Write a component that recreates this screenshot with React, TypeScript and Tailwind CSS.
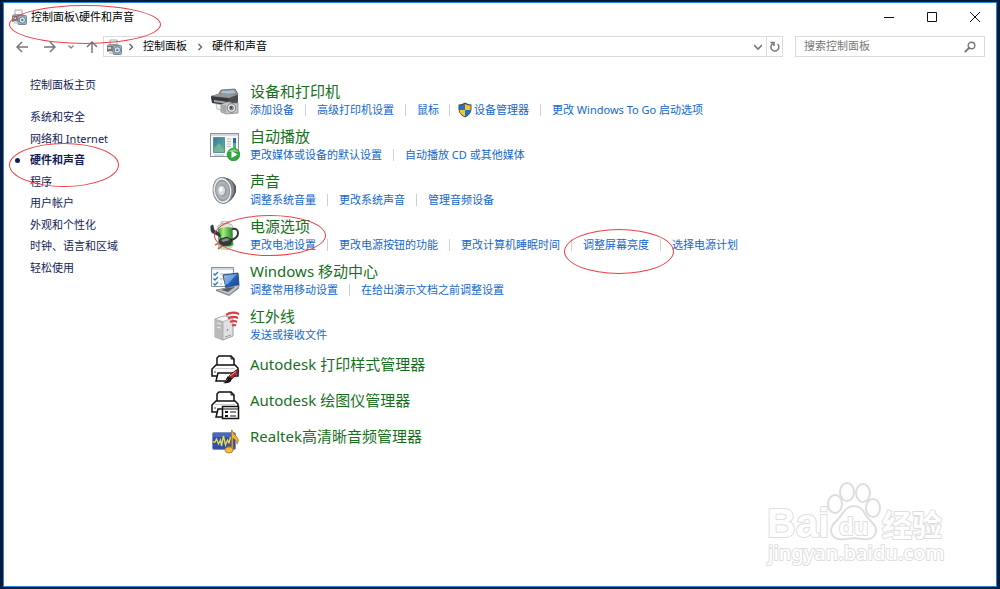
import type { ReactNode } from 'react';

/**
 * Icons
 */
const DevicesSmallIcon = () => (
  <svg viewBox="0 0 16 16" className="size-4 shrink-0" aria-hidden="true">
    <path d="M4 1h7v5H4z" fill="#fbfbfb" stroke="#a9aaac" />
    <path d="M1 6.5 3 5h9l2 2v6H1z" fill="#9a9ea3" />
    <path d="M1 7h8v5H1z" fill="#747a80" />
    <path d="M2 8h3v2H2z" fill="#c9dce8" />
    <path d="M3 12h3v3H3z" fill="#d6d8da" />
    <rect x="7" y="6.500" width="8.500" height="9" rx="1" fill="#a3b1bc" stroke="#7d8993" />
    <circle cx="11.300" cy="11" r="3.200" fill="#dbe8f1" stroke="#667b8c" />
    <circle cx="11.300" cy="11" r="1.200" fill="#4d80a8" />
  </svg>
);

const PrinterCameraIcon = () => (
  <svg viewBox="0 0 30 30" className="size-[30px]" aria-hidden="true">
    <path d="m8 9 3-5 14-1 3 5-8 3z" fill="#8d9195" stroke="#5c5f63" strokeWidth=".7" />
    <path d="m12 5 12-.8 1.500 3-15 1z" fill="#a8c4d2" />
    <path d="m1 10 9-2.500 18 1v8l-8 3-18-4z" fill="#4a4c50" />
    <path d="m1 10 9-2.500 18 1-9 3.500z" fill="#95999d" />
    <path d="m1 10.500 18 2v7.500L2 17z" fill="#37393d" />
    <path d="m4 14 11 1.500v2L4 16z" fill="#a4a8ab" />
    <path d="m6 18 8 1v6l-7-2z" fill="#f1f1ef" stroke="#a5a5a3" strokeWidth=".6" />
    <path d="M11 18.500 14 17l2-1h4l2 1h6v10l-12 1-5-2z" fill="#c4c6c8" stroke="#7b7d80" strokeWidth=".7" />
    <path d="M11.500 19h4.500v8l-4.500-2z" fill="#a5a7aa" />
    <circle cx="21.500" cy="22" r="4.300" fill="#e6e7e7" stroke="#77797b" />
    <circle cx="21.500" cy="22" r="2.400" fill="#77838c" />
    <circle cx="21" cy="21.500" r="1" fill="#243543" />
  </svg>
);

const AutoPlayIcon = () => (
  <svg viewBox="0 0 30 30" className="size-[30px]" aria-hidden="true">
    <defs>
      <linearGradient id="autoplay" x1="0" y1="0" x2="1" y2="1">
        <stop offset="0" stopColor="#3978aa" />
        <stop offset="1" stopColor="#68b48b" />
      </linearGradient>
    </defs>
    <rect x=".5" y="2.500" width="28" height="23" fill="#f7f8f9" stroke="#8b9299" />
    <path d="M1 3h27v2H1z" fill="#d3d9de" />
    <path d="M3.500 6.500h11v15h-11z" fill="url(#autoplay)" stroke="#5d9197" />
    <path d="m4 17 5-5 5 7v2H4z" fill="#8ac398" opacity=".6" />
    <path d="M17 8h4M17 10.500h4M17 13h4M17 15.500h4M4 24h10" stroke="#b7bcc1" />
    <path d="M23 7h3v10h-3z" fill="#35689d" />
    <path d="M23 12h3v5h-3z" fill="#56ac8b" />
    <circle cx="23.500" cy="23.500" r="6.300" fill="#31a73b" stroke="#168a25" strokeWidth=".7" />
    <path d="M18.500 21a6 6 0 0 1 10 0q-5-1-10 0" fill="#87d27e" />
    <path d="m21.500 20 6 3.500-6 3.500z" fill="#fff" />
  </svg>
);

const SpeakerIcon = () => (
  <svg viewBox="0 0 30 30" className="size-[30px]" aria-hidden="true">
    <defs>
      <radialGradient id="cone">
        <stop offset="0" stopColor="#b9bdc3" />
        <stop offset=".35" stopColor="#8e949c" />
        <stop offset=".75" stopColor="#b4b8be" />
        <stop offset="1" stopColor="#83878e" />
      </radialGradient>
    </defs>
    <path d="M13 1q9 1 13 9v6q-3 9-12 12z" fill="#56595d" />
    <path d="M19 4q5 5 4 12l-3 7" fill="none" stroke="#8a8d91" strokeWidth="2" />
    <ellipse cx="12.500" cy="14.500" rx="9.500" ry="13" transform="rotate(-6 12.500 14.500)" fill="#eceeef" stroke="#83868a" />
    <ellipse cx="12.500" cy="14.500" rx="7.500" ry="10.800" transform="rotate(-6 12.500 14.500)" fill="url(#cone)" />
    <ellipse cx="11.500" cy="14.500" rx="3.500" ry="4.800" fill="#d9dce0" />
    <ellipse cx="11" cy="13.500" rx="1.800" ry="2.400" fill="#f6f7f8" />
  </svg>
);

const PowerIcon = () => (
  <svg viewBox="0 0 30 30" className="size-[30px]" aria-hidden="true">
    <defs>
      <linearGradient id="battery">
        <stop offset="0" stopColor="#2b9b28" />
        <stop offset=".35" stopColor="#a6ee7f" />
        <stop offset="1" stopColor="#1b8420" />
      </linearGradient>
    </defs>
    <path d="M11 3V1q4-2 8 0v2z" fill="#e7e9e7" stroke="#999" strokeWidth=".6" />
    <path d="M8 5q6-4 14-1l1 21q-6 6-14 2z" fill="url(#battery)" stroke="#688668" strokeWidth=".7" />
    <path d="M8 5q6-4 14-1l.2 3Q15 4.500 8.200 8z" fill="#dfe5dc" />
    <path d="M9 24q7 4 14 0v2q-6 5-14 2z" fill="#d2dacf" />
    <path d="M22 8q6-1 6 4 0 5-7 7l-4 1" fill="none" stroke="#33393f" strokeWidth="2" />
    <path d="M.5 5q3-3 3 0l1 4 4 2q3 2 2 6L8 15 2 12q-2-2-1.500-7" fill="#373c42" />
    <path d="m10 18 7-2 5 3-2 5-8 1-3-4z" fill="#353a40" stroke="#181b1f" strokeWidth=".6" />
    <path d="m11 19 6-2 3 2-7 2z" fill="#868d95" />
    <path d="m9 22-4 2m7 1-4 3" stroke="#b07b4d" strokeWidth="1.600" />
  </svg>
);

const MobilityIcon = () => (
  <svg viewBox="0 0 30 30" className="size-[30px]" aria-hidden="true">
    <defs>
      <linearGradient id="screen" x1="0" y1="0" x2="1" y2="1">
        <stop offset="0" stopColor="#82bbef" />
        <stop offset=".5" stopColor="#2464bd" />
        <stop offset="1" stopColor="#153f93" />
      </linearGradient>
    </defs>
    <path d="M1.500 1.500h22v19h-22z" fill="#f9fbfd" stroke="#87919b" />
    <path d="M2 2h21v2H2z" fill="#d1dae2" />
    <path d="m3.500 7.500 1.500 1.500 3-3m-4.500 6.500L5 14l3-3m-4.500 6.500L5 19l3-3" fill="none" stroke="#2676bb" strokeWidth="1.300" />
    <path d="M10 8h9M10 13h4M10 18h2" stroke="#a8b7c3" />
    <path d="m13 9 15-2 1 12-13 3z" fill="url(#screen)" stroke="#35516d" />
    <path d="m14 10 13-2-9 10-3 1z" fill="#b5dcf7" opacity=".45" />
    <path d="m16 22 13-3v2l-10 8-13-5z" fill="#bfc5c9" stroke="#687078" strokeWidth=".7" />
    <path d="m11 24 6-2 8-1-7 5z" fill="#555e67" />
    <path d="m6 24 13 5 10-8v1.500L19 30 6 25z" fill="#83898f" />
  </svg>
);

const InfraredIcon = () => (
  <svg viewBox="0 0 30 30" className="size-[30px]" aria-hidden="true">
    <path d="m5 8 9-3 9 2v18l-10 4-8-3z" fill="#e0e1e2" stroke="#8a8c8e" strokeWidth=".8" />
    <path d="m5 8 8 2.500V29l-8-3z" fill="#b9bbbd" />
    <path d="m5 8 9-3 9 2-10 3.500z" fill="#f8f8f8" stroke="#999" strokeWidth=".5" />
    <path d="m7 12 4 1m-4 3 4 1" stroke="#eee" />
    <path d="M13 10.500V29" stroke="#999" strokeWidth=".6" />
    <path d="m15 26 6-2" stroke="#999" />
    <circle cx="17.500" cy="19" r=".8" fill="#6b6e70" />
    <g fill="none" stroke="#dc3c42" strokeWidth="2.200">
      <path d="M16 4q6-4 13-1" />
      <path d="M18 7.500q5-3 10-.5" />
      <path d="M20 11q4-2 7 0" />
      <path d="M22 14.500q2-1 4 0" />
    </g>
  </svg>
);

const Printer = () => (
  <>
    <path d="M7 11V4l2-2h12l3 3v6" fill="#fff" stroke="#111" strokeWidth="1.500" />
    <path d="M21 2v3h3" fill="none" stroke="#111" />
    <path d="M6 11h19l3 3v8H2v-7z" fill="#fff" stroke="#111" strokeWidth="1.500" />
    <path d="M5 14.500h20" stroke="#ccc" />
    <path d="m8 19-2 8h14l3-8z" fill="#fff" stroke="#111" strokeWidth="1.500" />
    <path d="M4 18h2" stroke="#888" strokeWidth="1.500" />
  </>
);

const PlotStyleIcon = () => (
  <svg viewBox="0 0 30 30" className="size-[30px]" aria-hidden="true">
    <Printer />
    <path d="m19 22 7-6q3-1 2.500 2l-6.500 7z" fill="#b3232a" stroke="#4a090d" strokeWidth=".8" />
    <path d="m20 22 6-4.500" stroke="#f6a0a0" />
    <path d="m18 22 4 3-2 3q-3 2-7 1 3-1 3-4z" fill="#151515" />
    <path d="m16 27 2-2" stroke="#c52c33" />
  </svg>
);

const PlotterIcon = () => (
  <svg viewBox="0 0 30 30" className="size-[30px]" aria-hidden="true">
    <Printer />
    <path d="M12.500 16.500h16v12h-16z" fill="#fff" stroke="#111" strokeWidth="1.500" />
    <path d="M13 19h15" stroke="#111" />
    <path d="M15 22h3M15 26h3" stroke="#111" strokeWidth="2" />
    <path d="M20 22h6M20 26h6" stroke="#111" />
  </svg>
);

const RealtekIcon = () => (
  <svg viewBox="0 0 30 30" className="size-[30px]" aria-hidden="true">
    <rect x="2.500" y="6.500" width="23" height="17" rx="1.500" fill="#3350a8" stroke="#7f93c8" />
    <path d="M3 7h22v4H3z" fill="#5671bd" opacity=".7" />
    <path d="M3 16h2l1.500-3 2 5 2-4 1 6 2-10 2 9 2-5 1.500 3 1.500-6" fill="none" stroke="#e9e04a" strokeWidth="1.300" />
    <path d="M22 4q1 4 4 6 4 4 1 8 0-4-4-6v12a3.500 3 0 1 1-1.500-3V4z" fill="#efb337" stroke="#a57118" strokeWidth=".7" />
    <ellipse cx="19" cy="24" rx="4" ry="3" fill="#f3b941" stroke="#a97218" strokeWidth=".7" />
  </svg>
);

const ShieldIcon = () => (
  <svg viewBox="0 0 14 16" className="h-4 w-3.5 shrink-0" aria-hidden="true">
    <path d="M7 .5q3 2 6.500 2v5q-.5 5-6.500 8-6-3-6.500-8v-5q3.500 0 6.500-2" fill="#4c4f55" />
    <path d="M7 2v6H1.500V3.500Q4 3.500 7 2" fill="#1e73c8" />
    <path d="M7 2q3 1.500 5.500 1.500V8H7z" fill="#f7c62f" />
    <path d="M1.500 8H7v6.500Q2 12 1.500 8" fill="#f7c62f" />
    <path d="M7 8h5.500Q12 12 7 14.500z" fill="#1e73c8" />
  </svg>
);

const ChevronRight = () => (
  <svg viewBox="0 0 6 8" className="h-2 w-1.5 shrink-0" fill="none" stroke="#666" strokeWidth="1.400" aria-hidden="true">
    <path d="m1.500 1 3 3-3 3" />
  </svg>
);

/**
 * Data
 */
type Task = { label: string; shield?: boolean };
type Category = { title: string; icon: ReactNode; tasks: Task[] };

const sidebarLinks = [
  '系统和安全',
  '网络和 Internet',
  '硬件和声音',
  '程序',
  '用户帐户',
  '外观和个性化',
  '时钟、语言和区域',
  '轻松使用',
];

const categories: Category[] = [
  {
    title: '设备和打印机',
    icon: <PrinterCameraIcon />,
    tasks: [
      { label: '添加设备' },
      { label: '高级打印机设置' },
      { label: '鼠标' },
      { label: '设备管理器', shield: true },
      { label: '更改 Windows To Go 启动选项' },
    ],
  },
  {
    title: '自动播放',
    icon: <AutoPlayIcon />,
    tasks: [{ label: '更改媒体或设备的默认设置' }, { label: '自动播放 CD 或其他媒体' }],
  },
  {
    title: '声音',
    icon: <SpeakerIcon />,
    tasks: [{ label: '调整系统音量' }, { label: '更改系统声音' }, { label: '管理音频设备' }],
  },
  {
    title: '电源选项',
    icon: <PowerIcon />,
    tasks: [
      { label: '更改电池设置' },
      { label: '更改电源按钮的功能' },
      { label: '更改计算机睡眠时间' },
      { label: '调整屏幕亮度' },
      { label: '选择电源计划' },
    ],
  },
  {
    title: 'Windows 移动中心',
    icon: <MobilityIcon />,
    tasks: [{ label: '调整常用移动设置' }, { label: '在给出演示文档之前调整设置' }],
  },
  {
    title: '红外线',
    icon: <InfraredIcon />,
    tasks: [{ label: '发送或接收文件' }],
  },
];

const tools = [
  { title: 'Autodesk 打印样式管理器', icon: <PlotStyleIcon /> },
  { title: 'Autodesk 绘图仪管理器', icon: <PlotterIcon /> },
  { title: 'Realtek高清晰音频管理器', icon: <RealtekIcon /> },
];

/**
 * Components
 */
const TitleBar = () => (
  <header className="flex h-7 items-center justify-between pl-[7px]">
    <div className="flex items-center gap-1">
      <DevicesSmallIcon />
      <h1 className="text-[11px] text-black">控制面板\硬件和声音</h1>
    </div>
    <div className="flex">
      <button type="button" aria-label="最小化" className="flex h-7 w-[43px] items-center justify-center">
        <svg viewBox="0 0 10 10" className="size-2.5" stroke="#111"><path d="M0 5.500h10" /></svg>
      </button>
      <button type="button" aria-label="最大化" className="flex h-7 w-[43px] items-center justify-center">
        <svg viewBox="0 0 10 10" className="size-2.5" fill="none" stroke="#111"><path d="M.5.5h9v9h-9z" /></svg>
      </button>
      <button type="button" aria-label="关闭" className="flex h-7 w-[43px] items-center justify-center">
        <svg viewBox="0 0 10 10" className="size-2.5" stroke="#111"><path d="m0 0 10 10M10 0 0 10" /></svg>
      </button>
    </div>
  </header>
);

const NavBar = () => (
  <nav className="mt-[5px] flex h-[21px] items-center pr-[11px] pl-3">
    <div className="flex w-[87px] items-center">
      <button type="button" aria-label="后退">
        <svg viewBox="0 0 12 12" className="size-3" fill="none" stroke="#777" strokeWidth="1.500"><path d="M12 6H1m5-5L1 6l5 5" /></svg>
      </button>
      <button type="button" aria-label="前进" className="ml-4">
        <svg viewBox="0 0 12 12" className="size-3" fill="none" stroke="#777" strokeWidth="1.500"><path d="M0 6h11M6 1l5 5-5 5" /></svg>
      </button>
      <button type="button" aria-label="最近浏览的位置" className="ml-3">
        <svg viewBox="0 0 6 6" className="size-1.5" fill="none" stroke="#888" strokeWidth="1.400"><path d="m.5 1.500 2.500 2.500 2.500-2.500" /></svg>
      </button>
      <button type="button" aria-label="上移" className="ml-3">
        <svg viewBox="0 0 12 12" className="size-3" fill="none" stroke="#777" strokeWidth="1.500"><path d="M6 12V1M1 6l5-5 5 5" /></svg>
      </button>
    </div>
    <div className="flex h-full flex-1 items-center border border-[#dcdcdc] pl-0.5 text-[11px] text-black">
      <DevicesSmallIcon />
      <span className="flex w-[21px] justify-center pr-1"><ChevronRight /></span>
      <a href="#home">控制面板</a>
      <span className="flex w-[25px] justify-center"><ChevronRight /></span>
      <a href="#hardware">硬件和声音</a>
      <button type="button" aria-label="以前的位置" className="mr-1 ml-auto">
        <svg viewBox="0 0 8 8" className="size-2" fill="none" stroke="#777" strokeWidth="1.600"><path d="m0 2 4 4 4-4" /></svg>
      </button>
      <button type="button" aria-label="刷新" className="flex h-full w-4 items-center justify-center border-l border-[#dcdcdc]">
        <svg viewBox="0 0 12 12" className="size-3" fill="none" stroke="#777" strokeWidth="1.500"><path d="M8.500 3a4 4 0 1 1-4.500-.5M1.500 1.500H5V5" /></svg>
      </button>
    </div>
    <label className="ml-3 flex h-full w-[190px] items-center border border-[#dcdcdc] px-2">
      <input
        type="search"
        aria-label="搜索控制面板"
        placeholder="搜索控制面板"
        className="min-w-0 flex-1 text-[11px] outline-none placeholder:text-[#777]"
      />
      <svg viewBox="0 0 12 12" className="size-3" fill="none" stroke="#777" strokeWidth="1.400" aria-hidden="true">
        <circle cx="7.500" cy="4.500" r="3.300" />
        <path d="M5 7 .8 11.200" strokeWidth="1.800" />
      </svg>
    </label>
  </nav>
);

const Sidebar = () => (
  <aside className="w-[206px] shrink-0 pl-[26px] text-[11px] text-[#151c55]">
    <a href="#home" className="block h-[35px] leading-[22px]">控制面板主页</a>
    <ul className="flex h-[167px] flex-col justify-between">
      {sidebarLinks.map((label) => (
        <li key={label} className="relative flex h-4 items-center leading-4">
          {label === '硬件和声音' ? (
            <>
              <span className="absolute -left-[15px] size-[5px] rounded-full bg-[#151c55]" />
              <a href="#hardware" aria-current="page" className="font-bold">{label}</a>
            </>
          ) : (
            <a href="#category">{label}</a>
          )}
        </li>
      ))}
    </ul>
  </aside>
);

const CategoryRow = ({ title, icon, tasks }: Category) => (
  <section className="flex h-9 gap-2.5">
    <div className="pt-[5px]">{icon}</div>
    <div>
      <h2 className="text-[15px] leading-5 text-[#176f1c]">
        <a href="#category">{title}</a>
      </h2>
      <ul className="flex pt-px text-[11px] leading-4 whitespace-nowrap text-[#1467cc]">
        {tasks.map((task, i) => (
          <li key={task.label} className="flex items-center">
            {i > 0 && (
              <span className={`h-3 w-px bg-[#d0d0d0] ${task.shield ? 'mr-2 ml-2.5' : 'mx-[11px]'}`} />
            )}
            <a href="#task" className="flex items-center gap-0.5">
              {task.shield && <ShieldIcon />}
              {task.label}
            </a>
          </li>
        ))}
      </ul>
    </div>
  </section>
);

const Watermark = () => (
  <svg viewBox="0 0 190 90" className="absolute right-[46px] bottom-[15px] h-[90px] w-[190px]" fill="#fff" stroke="#dedede" strokeWidth="2" strokeLinejoin="round" aria-label="Baidu 经验">
    <g fontFamily="Liberation Sans, Noto Sans CJK SC, sans-serif" fontWeight="700" paintOrder="stroke">
      <text x="7" y="56" fontSize="40">Bai</text>
      <text x="122" y="55" fontSize="30">经验</text>
    </g>
    <ellipse cx="75" cy="23" rx="7" ry="9" />
    <ellipse cx="87" cy="11" rx="7" ry="9" />
    <ellipse cx="103" cy="12" rx="7" ry="9" />
    <ellipse cx="113" cy="27" rx="7" ry="9" />
    <path d="M94 25c8 0 10 7 13 11s10 8 9 14c-1 8-8 9-14 8-6-1-10-1-16 0-7 1-14 0-15-8-1-6 6-10 9-14s6-11 14-11Z" />
    <text x="79" y="54" fontSize="24" fontFamily="Liberation Sans, sans-serif" fontWeight="700" paintOrder="stroke">du</text>
    <text x="8" y="79" fontSize="20" fontFamily="Noto Sans, sans-serif" fontWeight="500" paintOrder="stroke">jingyan.baidu.com</text>
  </svg>
);

/* Red rings that point at the steps to follow */
const Highlights = () => (
  <div className="pointer-events-none" aria-hidden="true">
    <div className="absolute top-[5px] left-[9px] h-[39px] w-[152px] rounded-[50%] border border-[#ee4046]" />
    <div className="absolute top-[143px] left-[9px] h-[44px] w-[110px] rounded-[50%] border border-[#ee4046]" />
    <div className="absolute top-[215px] left-[214px] h-[41px] w-[112px] rounded-[50%] border border-[#ee4046]" />
    <div className="absolute top-[229px] left-[564px] h-[45px] w-[110px] rounded-[50%] border border-[#ee4046]" />
  </div>
);

const App = () => {
  return (
    <div className="relative flex min-h-screen bg-[#031b3b] px-[3px] py-0.5 font-['Noto_Sans','Noto_Sans_CJK_SC',sans-serif]">
      <div className="relative flex-1 border border-[#2586d8] bg-white">
        <TitleBar />
        <NavBar />
        <div className="flex pt-[17px]">
          <Sidebar />
          <main className="pt-[7px]">
            <div className="flex flex-col gap-[9px]">
              {categories.map((category) => (
                <CategoryRow key={category.title} {...category} />
              ))}
            </div>
            <div className="mt-3 flex flex-col gap-1.5">
              {tools.map(({ title, icon }) => (
                <section key={title} className="flex h-[30px] gap-2.5">
                  {icon}
                  <h2 className="text-[15px] leading-5 text-[#176f1c]">
                    <a href="#tool">{title}</a>
                  </h2>
                </section>
              ))}
            </div>
          </main>
        </div>
        <Watermark />
      </div>
      <Highlights />
    </div>
  );
};

export default App;
